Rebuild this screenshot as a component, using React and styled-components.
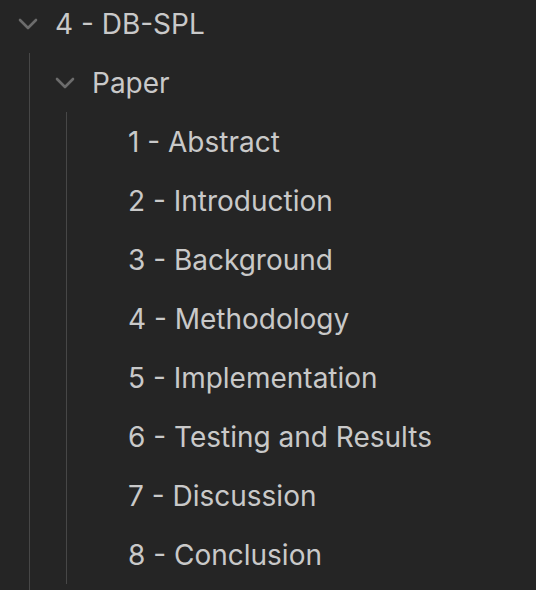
import styled, { createGlobalStyle } from "styled-components";

const GlobalStyle = createGlobalStyle`
  html, body {
    margin: 0;
    padding: 0;
    background: #252525;
    overflow: hidden;
  }
  body {
    font-family: Inter, "Liberation Sans", sans-serif;
  }
`;

const Tree = styled.div`
  width: 536px;
  height: 590px;
  overflow: hidden;
  background: #252525;
`;

const List = styled.div`
  margin-top: -6px;
`;

const Row = styled.div`
  height: 59px;
  display: flex;
  align-items: center;
  gap: 17px;
  padding-left: ${({ $pad }) => $pad}px;
  color: #c9c9c9;
  font-size: 28px;
  letter-spacing: 0;
  white-space: nowrap;
`;

const Twisty = styled.span`
  width: 20px;
  height: 12px;
  flex: none;
  display: flex;
  color: #6c6c6c;
`;

const Children = styled.div`
  margin-left: ${({ $indent }) => $indent}px;
  border-left: 1px solid #474747;
  padding-bottom: ${({ $tail }) => $tail}px;
`;

const Chevron = () => (
  <svg width="20" height="12" viewBox="0 0 20 12" fill="none">
    <polyline
      points="2,2 10,10 18,2"
      stroke="currentColor"
      strokeWidth="2.6"
      strokeLinecap="round"
      strokeLinejoin="round"
    />
  </svg>
);

const sections = [
  "1 - Abstract",
  "2 - Introduction",
  "3 - Background",
  "4 - Methodology",
  "5 - Implementation",
  "6 - Testing and Results",
  "7 - Discussion",
  "8 - Conclusion",
];

export default function App() {
  return (
    <Tree>
      <GlobalStyle />
      <List>
        <Row $pad={18}>
          <Twisty>
            <Chevron />
          </Twisty>
          4 - DB-SPL
        </Row>
        <Children $indent={29} $tail={40}>
          <Row $pad={25}>
            <Twisty>
              <Chevron />
            </Twisty>
            Paper
          </Row>
          <Children $indent={36} $tail={0}>
            {sections.map((s) => (
              <Row key={s} $pad={24}>
                <Twisty />
                {s}
              </Row>
            ))}
          </Children>
        </Children>
      </List>
    </Tree>
  );
}
